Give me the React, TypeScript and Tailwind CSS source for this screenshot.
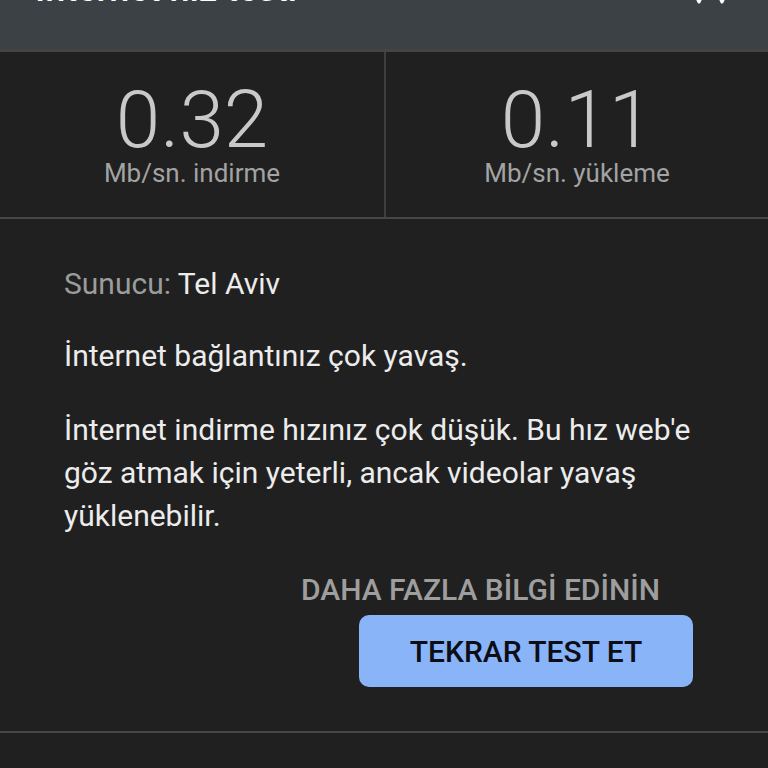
import React from "react";

export default function App() {
  return (
    <div
      className="w-[768px] h-[768px] overflow-hidden bg-[#202020]"
      style={{ fontFamily: "Roboto, 'Noto Sans', sans-serif" }}
    >
      {/* header (scrolled partially off top) */}
      <div className="relative h-[52px] bg-[#3b4144] border-b-[3px] border-[#444444]">
        <div className="absolute left-[35px] top-[-31px] text-[36px] leading-[40px] font-medium text-white whitespace-nowrap">
          İnternet hız testi
        </div>
        <svg className="absolute left-[690px] top-[-10px]" width="40" height="16" viewBox="0 0 40 16">
          <path d="M4 2 L9 12 L14 2" stroke="white" strokeWidth="3" fill="none" strokeLinecap="round" strokeLinejoin="round" />
          <path d="M27 2 L32 12 L37 2" stroke="white" strokeWidth="3" fill="none" strokeLinecap="round" strokeLinejoin="round" />
        </svg>
      </div>

      {/* stats */}
      <div className="grid grid-cols-2 h-[167px] border-b-2 border-[#464646]">
        <div className="flex flex-col items-center pt-[36px]">
          <div className="text-[80px] leading-[64px] font-light text-[#c9c9c9]">0.32</div>
          <div className="text-[26px] leading-[30px] text-[#a3a3a3] mt-[6px]">Mb/sn. indirme</div>
        </div>
        <div className="flex flex-col items-center border-l-2 border-[#3e3e3e] pt-[36px]">
          <div className="text-[80px] leading-[64px] font-light text-[#c9c9c9]">0.11</div>
          <div className="text-[26px] leading-[30px] text-[#a3a3a3] mt-[6px]">Mb/sn. yükleme</div>
        </div>
      </div>

      {/* body */}
      <div className="px-[64px] pt-[45px] h-[514px] border-b-2 border-[#464646] flex flex-col">
        <div className="text-[30px] leading-[40px]">
          <span className="text-[#9c9c9c]">Sunucu: </span>
          <span className="text-[#ececec]">Tel Aviv</span>
        </div>
        <div className="text-[30px] leading-[40px] text-[#ececec] mt-[32px]">
          İnternet bağlantınız çok yavaş.
        </div>
        <div className="text-[30px] leading-[43px] text-[#ececec] mt-[32px] w-[640px]">
          İnternet indirme hızınız çok düşük. Bu hız web'e göz atmak için yeterli, ancak videolar yavaş yüklenebilir.
        </div>
        <div className="flex flex-col items-end mr-[11px] mt-[33px]">
          <div className="text-[30px] leading-[40px] font-medium text-[#9e9e9e] mr-[33px]">
            DAHA FAZLA BİLGİ EDİNİN
          </div>
          <button className="mt-[5px] w-[334px] h-[72px] rounded-[10px] bg-[#8ab4f8] text-[30px] font-medium text-[#0b0d17]">
            TEKRAR TEST ET
          </button>
        </div>
      </div>
    </div>
  );
}
